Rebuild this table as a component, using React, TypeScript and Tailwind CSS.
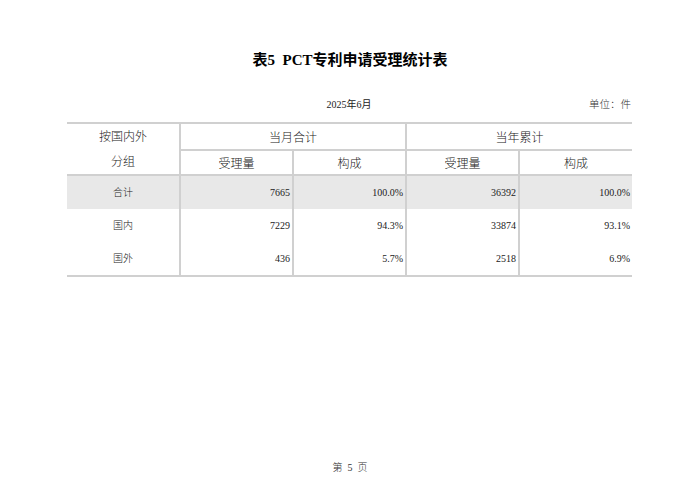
const rows = [
  { name: "合计", m: "7665", mp: "100.0%", y: "36392", yp: "100.0%", shaded: true },
  { name: "国内", m: "7229", mp: "94.3%", y: "33874", yp: "93.1%", shaded: false },
  { name: "国外", m: "436", mp: "5.7%", y: "2518", yp: "6.9%", shaded: false },
];

const serif = "font-['Liberation_Serif','Noto_Sans_CJK_SC',serif]";
const line = "border-[#d0d0d0]";

export default function App() {
  return (
    <div className={`flex h-[494px] w-[700px] flex-col bg-white text-[#222] ${serif}`}>
      <h1 className="mt-[49px] text-center text-[15px] font-bold leading-[22px] text-black">
        表5&nbsp;&nbsp;PCT专利申请受理统计表
      </h1>

      <div className="mx-[67px] mt-[26px] flex h-[16px] items-center text-[10px] leading-[16px]">
        <div className="flex-1" />
        <div className="w-[120px] text-center">2025年6月</div>
        <div className="flex-1 pr-[2px] text-right text-[10.5px] font-light text-[#333]">单位：件</div>
      </div>

      <table className="mx-[67px] mt-[9px] w-[565px] table-fixed border-collapse text-[10px]">
        <colgroup>
          <col className="w-[113px]" />
          <col className="w-[113px]" />
          <col className="w-[113px]" />
          <col className="w-[113px]" />
          <col className="w-[113px]" />
        </colgroup>
        <thead className="font-['Noto_Sans_CJK_SC',serif] text-[12px] font-light">
          <tr className={`h-[26px] border-t-2 ${line}`}>
            <td rowSpan={2} className={`border-r-2 ${line} p-0 text-center align-top`}>
              <div className="flex h-[24px] items-center justify-center">按国内外</div>
              <div className="flex h-[26px] items-center justify-center">分组</div>
            </td>
            <td colSpan={2} className={`border-r-2 border-b-2 ${line} p-0 text-center`}>当月合计</td>
            <td colSpan={2} className={`border-b-2 ${line} p-0 text-center`}>当年累计</td>
          </tr>
          <tr className={`h-[24px] border-b-2 ${line}`}>
            <td className={`border-r-2 ${line} p-0 text-center`}>受理量</td>
            <td className={`border-r-2 ${line} p-0 text-center`}>构成</td>
            <td className={`border-r-2 ${line} p-0 text-center`}>受理量</td>
            <td className="p-0 text-center">构成</td>
          </tr>
        </thead>
        <tbody>
          {rows.map((r, i) => (
            <tr
              key={r.name}
              className={`h-[33px] ${r.shaded ? "bg-[#e8e8e8]" : ""} ${i === rows.length - 1 ? `border-b-2 ${line}` : ""}`}
            >
              <td className={`border-r-2 ${line} p-0 text-center font-light`}>{r.name}</td>
              <td className={`border-r-2 ${line} px-[2px] text-right`}>{r.m}</td>
              <td className={`border-r-2 ${line} px-[2px] text-right`}>{r.mp}</td>
              <td className={`border-r-2 ${line} px-[2px] text-right`}>{r.y}</td>
              <td className="px-[2px] text-right">{r.yp}</td>
            </tr>
          ))}
        </tbody>
      </table>

      <div className="flex-1" />
      <div className="mb-[19px] text-center text-[10px] font-light leading-[14px] text-[#333]">
        第&nbsp;&nbsp;5&nbsp;&nbsp;页
      </div>
    </div>
  );
}
